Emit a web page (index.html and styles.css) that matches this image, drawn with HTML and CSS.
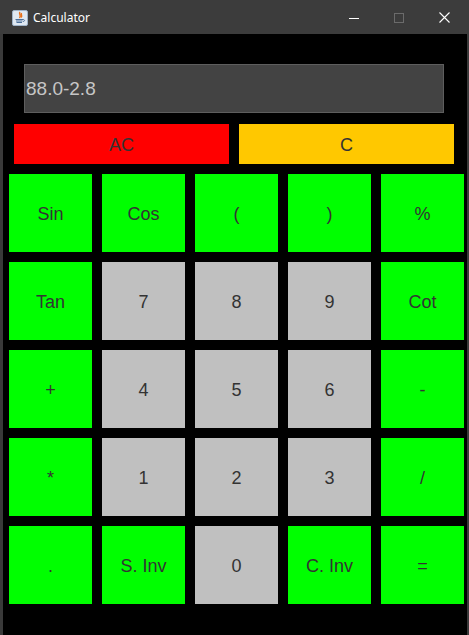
FILE: index.html
```html
<!DOCTYPE html>
<html>
<head>
<meta charset="utf-8">
<link rel="stylesheet" href="styles.css">
</head>
<body>
<div class="window">
  <div class="titlebar">
    <svg class="app-icon" width="16" height="16" viewBox="0 0 16 16">
      <rect x="0.5" y="0.5" width="15" height="15" rx="1.5" fill="#dfe8f2" stroke="#9fb3c8"/>
      <path d="M8 2 C6 4 10 5 7.5 8 M9.5 3 C8.5 5 11 5.5 9 7.5" stroke="#e8701a" stroke-width="1.4" fill="none"/>
      <path d="M3.5 9.5 H11 M4 11 H10.5 M4.5 12.5 H10 M11 9.5 C13 9.5 13 11.5 11 11.5" stroke="#4a6f9a" stroke-width="1" fill="none"/>
    </svg>
    <span class="title">Calculator</span>
    <div class="controls">
      <span class="ctl"><svg width="10" height="10" viewBox="0 0 10 10"><path d="M0 5.5 H10" stroke="#fff" stroke-width="1"/></svg></span>
      <span class="ctl"><svg width="10" height="10" viewBox="0 0 10 10"><rect x="0.5" y="0.5" width="9" height="9" fill="none" stroke="#6b6b6b"/></svg></span>
      <span class="ctl"><svg width="11" height="11" viewBox="0 0 11 11"><path d="M0.5 0.5 L10.5 10.5 M10.5 0.5 L0.5 10.5" stroke="#fff" stroke-width="1.1"/></svg></span>
    </div>
  </div>
  <div class="content">
    <div class="display">88.0-2.8</div>
    <div class="clear-row">
      <div class="btn ac">AC</div>
      <div class="btn c">C</div>
    </div>
    <div class="grid">
      <div class="btn fn">Sin</div>
      <div class="btn fn">Cos</div>
      <div class="btn fn">(</div>
      <div class="btn fn">)</div>
      <div class="btn fn">%</div>
      <div class="btn fn">Tan</div>
      <div class="btn num">7</div>
      <div class="btn num">8</div>
      <div class="btn num">9</div>
      <div class="btn fn">Cot</div>
      <div class="btn fn">+</div>
      <div class="btn num">4</div>
      <div class="btn num">5</div>
      <div class="btn num">6</div>
      <div class="btn fn">-</div>
      <div class="btn fn">*</div>
      <div class="btn num">1</div>
      <div class="btn num">2</div>
      <div class="btn num">3</div>
      <div class="btn fn">/</div>
      <div class="btn fn">.</div>
      <div class="btn fn">S. Inv</div>
      <div class="btn num">0</div>
      <div class="btn fn">C. Inv</div>
      <div class="btn fn">=</div>
    </div>
  </div>
</div>
</body>
</html>
```

FILE: styles.css
```css
html, body {
  margin: 0;
  padding: 0;
  background: #3a3a3a;
}
.window {
  width: 469px;
  height: 635px;
  display: flex;
  flex-direction: column;
  background: #3a3a3a;
}
.titlebar {
  height: 34px;
  display: flex;
  align-items: center;
  background: #3c3c3c;
}
.app-icon {
  margin-left: 12px;
  margin-top: 2px;
}
.title {
  margin-left: 5px;
  margin-top: 1px;
  color: #ffffff;
  font-family: "Noto Sans", "Open Sans", sans-serif;
  font-size: 12px;
}
.controls {
  margin-left: auto;
  display: flex;
  align-items: center;
  margin-right: 19px;
  gap: 35px;
  margin-top: 1px;
}
.ctl {
  display: flex;
}
.content {
  flex: 1;
  margin: 0 2px 0 3px;
  background: #000;
  padding-top: 30px;
  display: flex;
  flex-direction: column;
}
.display {
  margin-left: 21px;
  width: 417px;
  height: 46px;
  border: 1px solid #5e5e5e;
  background: #434343;
  color: #c6c6c6;
  font-family: "Liberation Sans", Arial, sans-serif;
  font-size: 19px;
  line-height: 46px;
  padding-left: 1px;
  padding-top: 1px;
  box-sizing: content-box;
}
.clear-row {
  margin-top: 11px;
  margin-left: 11px;
  display: flex;
  gap: 10px;
}
.btn {
  display: flex;
  align-items: center;
  justify-content: center;
  padding-top: 3px;
  box-sizing: border-box;
  color: #333333;
  font-family: "Liberation Sans", Arial, sans-serif;
  font-size: 18px;
}
.clear-row .btn {
  width: 215px;
  height: 40px;
}
.ac { background: #ff0000; }
.c { background: #ffc800; }
.grid {
  margin-top: 10px;
  margin-left: 6px;
  display: grid;
  grid-template-columns: repeat(5, 83px);
  grid-auto-rows: 78px;
  gap: 10px;
}
.fn { background: #00ff00; }
.num { background: #c0c0c0; }
```
